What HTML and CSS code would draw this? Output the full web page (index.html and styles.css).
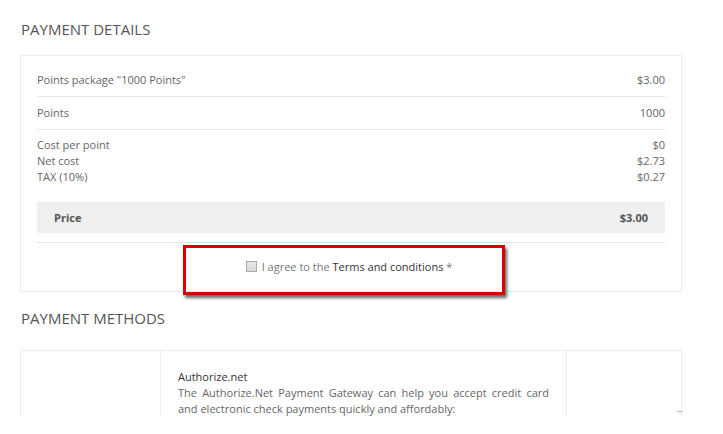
FILE: index.html
```html
<!DOCTYPE html>
<html>
<head>
<meta charset="utf-8">
<link rel="stylesheet" href="styles.css">
</head>
<body>
<div class="page">
  <h2 class="heading">PAYMENT DETAILS</h2>
  <div class="card">
    <div class="row row-first"><span>Points package "1000 Points"</span><span>$3.00</span></div>
    <div class="row row-second"><span>Points</span><span>1000</span></div>
    <div class="group">
      <div class="line"><span>Cost per point</span><span>$0</span></div>
      <div class="line"><span>Net cost</span><span>$2.73</span></div>
      <div class="line"><span>TAX (10%)</span><span>$0.27</span></div>
    </div>
    <div class="price"><span>Price</span><span>$3.00</span></div>
    <div class="agree">
      <label class="agree-label"><span class="check"></span>I agree to the <span class="terms">Terms and conditions</span> *</label>
      <div class="highlight"></div>
    </div>
  </div>
  <h2 class="heading heading-methods">PAYMENT METHODS</h2>
  <div class="clip">
    <div class="methods">
      <div class="col col-logo"></div>
      <div class="col col-desc">
        <div class="m-title">Authorize.net</div>
        <p class="m-text">The Authorize.Net Payment Gateway can help you accept credit card and electronic check payments quickly and affordably:</p>
      </div>
      <div class="col col-action"></div>
    </div>
  </div>
  <div class="dash"></div>
</div>
</body>
</html>
```
FILE: styles.css
```css
html, body {
  margin: 0;
  padding: 0;
  background: #ffffff;
}
body {
  font-family: "Open Sans", "Noto Sans", sans-serif;
  font-size: 11px;
  color: #666;
}
.page {
  position: relative;
  width: 662px;
  padding: 0 0 0 20px;
}
.heading {
  margin: 0;
  padding: 19px 0 0 1px;
  height: 55px;
  box-sizing: border-box;
  font-size: 15px;
  line-height: 20px;
  font-weight: normal;
  color: #555;
  letter-spacing: 0;
}
.card {
  border: 1px solid #ececec;
  padding: 0 16px;
  height: 237px;
  box-sizing: border-box;
}
.row {
  display: flex;
  justify-content: space-between;
  border-bottom: 1px solid #e6e6e6;
  line-height: 16px;
  box-sizing: border-box;
}
.row-first { height: 41px; padding-top: 16px; }
.row-second { height: 33px; padding-top: 8px; }
.group {
  padding-top: 7px;
  height: 72px;
  box-sizing: border-box;
}
.line {
  display: flex;
  justify-content: space-between;
  line-height: 16px;
  height: 16px;
}
.price {
  display: flex;
  justify-content: space-between;
  align-items: center;
  height: 31px;
  padding: 0 17px;
  background: #efefef;
  font-weight: bold;
  color: #555;
}
.agree {
  position: relative;
  margin-top: 9px;
  border-top: 1px solid #e6e6e6;
  height: 49px;
  display: flex;
  justify-content: center;
  align-items: center;
  padding-right: 4px;
  box-sizing: border-box;
}
.agree-label {
  display: flex;
  align-items: center;
  color: #777;
  white-space: pre;
  margin-top: -1px;
}
.check {
  width: 9px;
  height: 9px;
  border: 1px solid #aaa;
  background: linear-gradient(#e8e8e8, #d8d8d8);
  margin-right: 5px;
}
.terms { color: #333; }
.highlight {
  position: absolute;
  left: 146px;
  top: 2px;
  width: 316px;
  height: 44px;
  border: 3px solid #d90000;
  box-shadow: 2px 3px 3px rgba(0,0,0,0.6);
}
.heading-methods {
  padding-top: 16px;
  height: 58px;
}
.clip {
  height: 66px;
  overflow: hidden;
}
.methods {
  display: flex;
  border: 1px solid #ececec;
  height: 200px;
}
.col-logo {
  width: 139px;
  border-right: 1px solid #ececec;
}
.col-desc {
  width: 371px;
  padding: 18px 17px 0;
  border-right: 1px solid #ececec;
}
.col-action { flex: 1; }
.m-title {
  color: #333;
  line-height: 16px;
}
.m-text {
  margin: 0;
  line-height: 16px;
  text-align: justify;
  color: #666;
}
.dash {
  position: absolute;
  left: 677px;
  top: 411px;
  width: 6px;
  height: 1px;
  background: #bbb;
}
```
